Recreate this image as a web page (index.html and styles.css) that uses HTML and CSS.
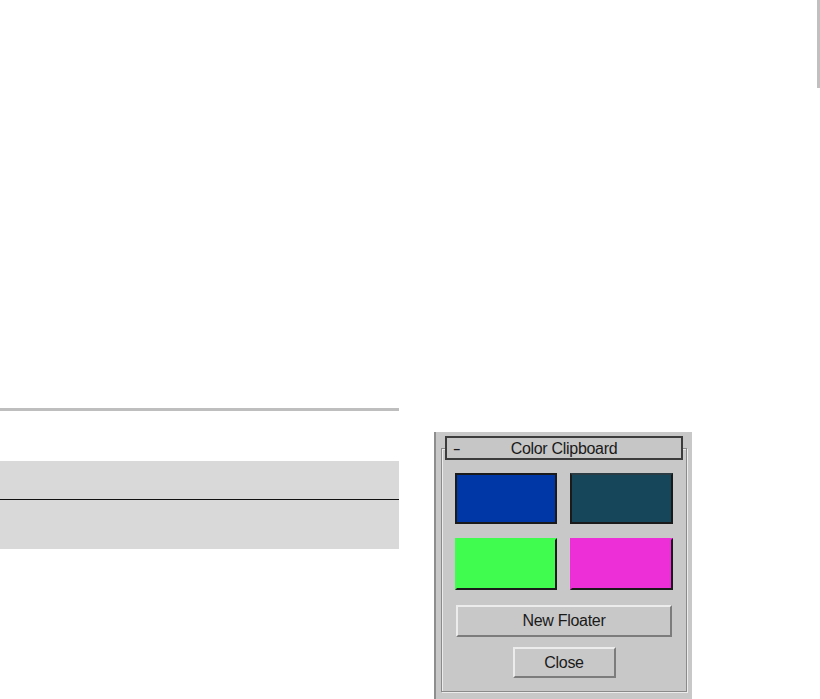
FILE: index.html
```html
<!DOCTYPE html>
<html lang="en">
<head>
  <meta charset="UTF-8" />
  <title>Color Clipboard</title>
  <link rel="stylesheet" href="styles.css">
</head>
<body>
  <div class="page">
    <div class="left-col">
      <div class="rule"></div>
      <div class="table-block">
        <div class="table-row first"></div>
        <div class="table-row"></div>
      </div>
    </div>

    <div class="floater">
      <div class="group">
        <div class="rollout-title">
          <span class="minus">-</span>
          <span class="title-text">Color Clipboard</span>
        </div>
        <div class="swatches">
          <div class="swatch blue"></div>
          <div class="swatch teal"></div>
          <div class="swatch green"></div>
          <div class="swatch magenta"></div>
        </div>
        <button class="win-button wide">New Floater</button>
        <button class="win-button close">Close</button>
      </div>
    </div>

    <div class="edge-bar"></div>
  </div>
</body>
</html>
```

FILE: styles.css
```css
html, body {
  margin: 0;
  background: #fff;
  overflow: hidden;
}

body {
  font-family: 'Liberation Sans', Arial, sans-serif;
}

.page {
  display: flex;
  align-items: flex-start;
  width: 820px;
  height: 699px;
}

.left-col {
  width: 399px;
  margin-top: 408px;
}

.rule {
  height: 3px;
  background: #bebebe;
}

.table-block {
  margin-top: 50px;
  background: #d9d9d9;
}

.table-row {
  height: 38px;
}

.table-row.first {
  border-bottom: 1px solid #111;
}

.table-row:last-child {
  height: 49px;
}

.floater {
  margin-left: 35px;
  margin-top: 432px;
  width: 258px;
  height: 272px;
  background: #c8c8c8;
  border-left: 2px solid #8e8e8e;
  padding: 16px 5px 0 5px;
  box-sizing: border-box;
}

.group {
  width: 246px;
  height: 244px;
  border: 1px solid #8a8a8a;
  box-shadow: inset 1px 1px 0 #ececec, 1px 1px 0 #ececec;
  box-sizing: border-box;
  display: flex;
  flex-direction: column;
  align-items: center;
}

.rollout-title {
  margin-top: -13px;
  width: 238px;
  height: 24px;
  box-sizing: border-box;
  border: 2px solid #3c3c3c;
  background: #c6c6c6;
  display: flex;
  align-items: center;
  justify-content: center;
  position: relative;
  padding-top: 2px;
  font-size: 16px;
  color: #1a1a1a;
}

.minus {
  position: absolute;
  left: 7px;
  top: 2px;
  font-size: 16px;
  transform: scaleX(1.5);
}

.title-text {
  letter-spacing: -0.3px;
}

.swatches {
  margin-top: 13px;
  display: grid;
  grid-template-columns: 102px 103px;
  column-gap: 13px;
  row-gap: 14px;
}

.swatch {
  height: 51px;
  box-sizing: border-box;
  border: 2px solid #1a1a1a;
}

.blue { background: #0037a6; }
.teal { background: #15465a; border-top-color: #2b3c44; }
.green {
  background: #3ffc4f;
  border-top-color: #3ffc4f;
  border-left-color: #3ffc4f;
  height: 52px;
}
.magenta {
  background: #ed2fd8;
  border-top-color: #ed2fd8;
  border-left-color: #ed2fd8;
  height: 52px;
}

.win-button {
  font-family: 'Liberation Sans', Arial, sans-serif;
  font-size: 16px;
  color: #1a1a1a;
  background: #c8c8c8;
  border: 2px solid;
  border-color: #ececec #7c7c7c #7c7c7c #ececec;
  box-sizing: border-box;
  padding: 0;
  letter-spacing: -0.3px;
}

.win-button.wide {
  margin-top: 15px;
  width: 216px;
  height: 32px;
}

.win-button.close {
  margin-top: 10px;
  width: 103px;
  height: 31px;
}

.edge-bar {
  margin-left: auto;
  width: 3px;
  height: 88px;
  background: #c0c0c0;
}
```
